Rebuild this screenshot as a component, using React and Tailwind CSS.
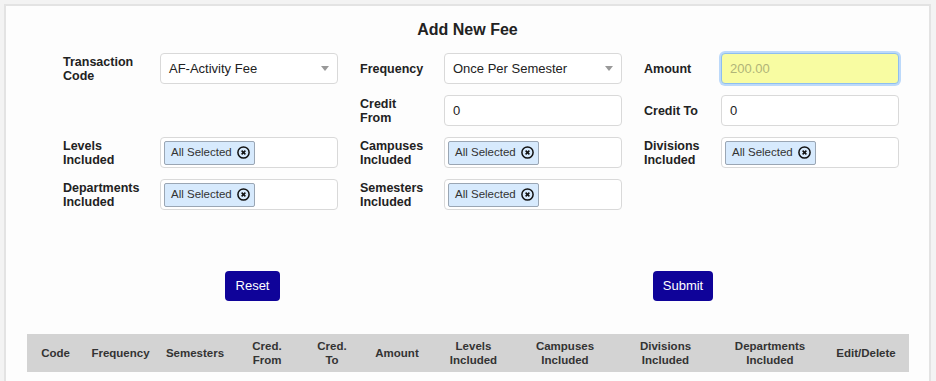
import React from 'react';

const font = { fontFamily: '"Liberation Sans", Arial, sans-serif' };

const Label = ({ children, w }) => (
  <div className={`${w} flex items-center text-[12.5px] font-bold leading-[14px] text-[#222]`}>
    {children}
  </div>
);

const Select = ({ value }) => (
  <div className="w-[178px] h-[31px] flex items-center justify-between rounded-[4px] border border-[#d9d9d9] bg-white pl-2 pr-[8px] text-[13px] text-[#222]">
    <span>{value}</span>
    <svg width="8" height="5" viewBox="0 0 8 5">
      <path d="M0 0 L8 0 L4 5 Z" fill="#999" />
    </svg>
  </div>
);

const Input = ({ value, amount }) =>
  amount ? (
    <div className="w-[178px] h-[31px] flex items-center rounded-[4px] border border-[#8dbef0] bg-[#f8fca2] pl-2 text-[13px] text-[#b0b478] shadow-[0_0_0_2px_#bcd9fa]">
      {value}
    </div>
  ) : (
    <div className="w-[178px] h-[31px] flex items-center rounded-[4px] border border-[#d9d9d9] bg-white pl-2 text-[13px] text-[#222]">
      {value}
    </div>
  );

const CircleX = () => (
  <svg width="13" height="13" viewBox="0 0 13 13" className="ml-[5px]">
    <circle cx="6.5" cy="6.5" r="5.6" fill="none" stroke="#111" strokeWidth="1.5" />
    <path d="M4.6 4.6 L8.4 8.4 M8.4 4.6 L4.6 8.4" stroke="#111" strokeWidth="1.5" />
  </svg>
);

const Multi = () => (
  <div className="w-[178px] h-[31px] flex items-center rounded-[4px] border border-[#d9d9d9] bg-white pl-[3px]">
    <div className="h-[24px] flex items-center rounded-[2px] border border-[#9aa6b4] bg-[#d7eafd] pl-[6px] pr-[4px] text-[11.5px] text-[#333]">
      All Selected
      <CircleX />
    </div>
  </div>
);

const Group = ({ label, w, children }) => (
  <div className="flex">
    {label ? <Label w={w}>{label}</Label> : null}
    {children}
  </div>
);

const cols = [
  ['Code', 'w-[57px]'],
  ['Frequency', 'w-[73px]'],
  ['Semesters', 'w-[76px]'],
  [['Cred.', 'From'], 'w-[68px]'],
  [['Cred.', 'To'], 'w-[62px]'],
  ['Amount', 'w-[68px]'],
  [['Levels', 'Included'], 'w-[85px]'],
  [['Campuses', 'Included'], 'w-[98px]'],
  [['Divisions', 'Included'], 'w-[103px]'],
  [['Departments', 'Included'], 'w-[106px]'],
  ['Edit/Delete', 'w-[86px]'],
];

export default function App() {
  return (
    <div className="h-[381px] bg-[#f3f3f3] pt-[4px] pl-[4px] overflow-hidden" style={font}>
      <div className="w-[927px] h-[400px] border-2 border-[#e3e3e3] bg-[#fdfdfd]">
        <h1 className="mt-[15px] text-center text-[16px] font-bold leading-[18px] text-[#222]">Add New Fee</h1>

        <div className="mt-[14px] ml-[57px] grid grid-cols-[275px_262px_255px] gap-x-[22px] gap-y-[11px]">
          <Group label={<>Transaction<br />Code</>} w="w-[97px]">
            <Select value="AF-Activity Fee" />
          </Group>
          <Group label="Frequency" w="w-[84px]">
            <Select value="Once Per Semester" />
          </Group>
          <Group label="Amount" w="w-[77px]">
            <Input value="200.00" amount />
          </Group>

          <div />
          <Group label={<>Credit<br />From</>} w="w-[84px]">
            <Input value="0" />
          </Group>
          <Group label="Credit To" w="w-[77px]">
            <Input value="0" />
          </Group>

          <Group label={<>Levels<br />Included</>} w="w-[97px]">
            <Multi />
          </Group>
          <Group label={<>Campuses<br />Included</>} w="w-[84px]">
            <Multi />
          </Group>
          <Group label={<>Divisions<br />Included</>} w="w-[77px]">
            <Multi />
          </Group>

          <Group label={<>Departments<br />Included</>} w="w-[97px]">
            <Multi />
          </Group>
          <Group label={<>Semesters<br />Included</>} w="w-[84px]">
            <Multi />
          </Group>
          <div />
        </div>

        <div className="mt-[61px] flex">
          <button className="ml-[219px] h-[30px] w-[55px] rounded-[4px] bg-[#0f0399] text-[13px] text-white">Reset</button>
          <button className="ml-[373px] h-[30px] w-[60px] rounded-[4px] bg-[#0f0399] text-[13px] text-white">Submit</button>
        </div>

        <div className="mt-[33px] ml-[21px] w-[882px] h-[38px] flex items-center bg-[#d3d3d3] text-[11.5px] font-bold leading-[14px] text-[#333]">
          {cols.map(([t, w], i) => (
            <div key={i} className={`${w} text-center`}>
              {Array.isArray(t) ? (
                <>
                  {t[0]}
                  <br />
                  {t[1]}
                </>
              ) : (
                t
              )}
            </div>
          ))}
        </div>
      </div>
    </div>
  );
}
